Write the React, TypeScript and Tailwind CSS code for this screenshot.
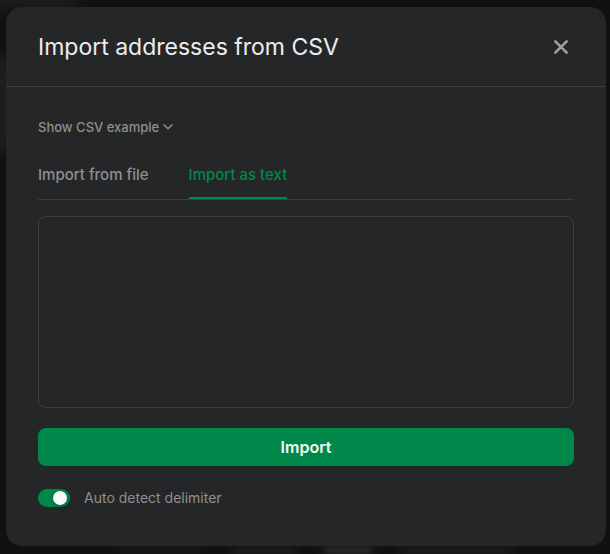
import { useState } from "react";

const tabs = ["Import from file", "Import as text"];

export default function App() {
  const [active, setActive] = useState(1);
  const [text, setText] = useState("");
  const [auto, setAuto] = useState(true);

  return (
    <div className="relative min-h-screen overflow-hidden bg-[#101111] pt-[7px] pr-1 pb-2 pl-1.5 font-['Inter','Liberation_Sans',sans-serif] text-[#8f8f8f]">
      {/* blurred page content behind the dialog */}
      <div className="absolute -top-4 -left-8 h-6 w-28 bg-[#1d1f1e] blur-sm" />
      <div className="absolute top-14 -left-2 h-24 w-5 bg-[#202221] blur-sm" />
      <div className="absolute bottom-0 left-30 h-2 w-20 bg-[#1a1b1b] blur-xs" />
      <div className="absolute bottom-0 left-58 h-2 w-16 bg-[#202020] blur-xs" />
      <div className="absolute bottom-0 left-81 h-2 w-12 bg-[#303030] blur-xs" />
      <div className="absolute bottom-0 left-100 h-2 w-28 bg-[#1f1f1f] blur-xs" />

      <section
        role="dialog"
        aria-labelledby="dialog-title"
        className="relative rounded-2xl bg-[#252628]"
      >
        <header className="flex h-20 items-center justify-between border-b border-[#3c3d3f] px-8">
          <h1 id="dialog-title" className="text-[23px] leading-7 text-[#ededed]">
            Import addresses from CSV
          </h1>
          <button type="button" aria-label="Close" className="flex size-[26px] items-center justify-center text-[#a0a0a0]">
            <svg viewBox="0 0 16 16" className="size-4" fill="none" stroke="currentColor" strokeWidth="2.6" strokeLinecap="round">
              <path d="M2.3 2.3 13.7 13.7M13.7 2.3 2.3 13.7" />
            </svg>
          </button>
        </header>

        <div className="flex flex-col px-8 pt-[30px] pb-[38px]">
          <button type="button" className="flex items-center gap-1 self-start text-[13px] leading-5 font-medium">
            Show CSV example
            <svg viewBox="0 0 10 6" className="h-1.5 w-2.5" fill="none" stroke="currentColor" strokeWidth="1.5" strokeLinecap="round" strokeLinejoin="round">
              <path d="M1 0.8 5 4.8 9 0.8" />
            </svg>
          </button>

          <div role="tablist" className="mt-6 flex gap-10 border-b border-[#3c3d3f]">
            {tabs.map((tab, i) => (
              <button
                key={tab}
                type="button"
                role="tab"
                aria-selected={active === i}
                onClick={() => setActive(i)}
                className={`border-b-2 pt-1 pb-3 text-[15px] leading-5 font-medium ${
                  active === i ? "border-[#00884b] text-[#00884b]" : "border-transparent"
                }`}
              >
                {tab}
              </button>
            ))}
          </div>

          <textarea
            aria-label="CSV text"
            value={text}
            onChange={(e) => setText(e.target.value)}
            className="mt-4 h-48 w-full resize-none rounded-lg border border-[#3c3d3f] bg-transparent p-3 text-sm text-[#ededed] outline-none"
          />

          <button type="button" className="mt-5 h-[38px] w-full rounded-lg bg-[#00884b] text-base leading-5 font-semibold text-[#f2f8f5]">
            Import
          </button>

          <label className="mt-[22px] flex items-center gap-3.5 self-start text-sm leading-5">
            <input
              type="checkbox"
              role="switch"
              checked={auto}
              onChange={(e) => setAuto(e.target.checked)}
              className="flex h-[18px] w-8 appearance-none items-center rounded-full bg-[#4a4b4d] px-[3px] before:size-3.5 before:rounded-full before:bg-[#fafafa] before:shadow-[0_1px_3px_rgba(0,0,0,0.4)] checked:justify-end checked:bg-[#00884b]"
            />
            Auto detect delimiter
          </label>
        </div>
      </section>
    </div>
  );
}
